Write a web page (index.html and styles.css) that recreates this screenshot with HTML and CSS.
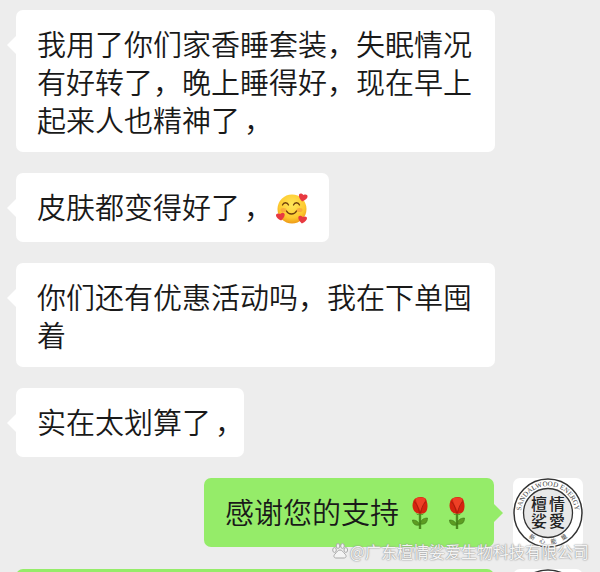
FILE: index.html
```html
<!DOCTYPE html>
<html lang="zh-CN">
<head>
    <meta charset="UTF-8">
    <meta name="viewport" content="width=device-width, initial-scale=1.0">
    <title>聊天记录</title>
    <link rel="stylesheet" href="styles.css">
</head>
<body>
    <main class="chat">
        <div class="message"><p class="bubble">我用了你们家香睡套装，失眠情况有好转了，晚上睡得好，现在早上起来人也精神了<span class="comma">，</span></p></div>

        <div class="message"><p class="bubble">皮肤都变得好了<span class="comma">，</span><svg class="emoji face" viewBox="0 0 36 36" role="img" aria-label="🥰">
            <defs>
                <radialGradient id="skin" cx=".5" cy=".35" r=".65">
                    <stop offset="0" stop-color="#ffe75a"/>
                    <stop offset=".7" stop-color="#fdc92f"/>
                    <stop offset="1" stop-color="#ee9a17"/>
                </radialGradient>
                <path id="heart" d="M0 4.500C-7 0-4.500-5 0-2 4.500-5 7 0 0 4.500z" fill="#e83a41"/>
            </defs>
            <circle cx="20.500" cy="18" r="14.500" fill="url(#skin)"/>
            <path d="M11 14c1-3 5-3 6 0M22 14c1-3 5-3 6 0" stroke="#70400c" stroke-width="1.300" fill="none" stroke-linecap="round"/>
            <path d="M15 20c2 4 8 4 10 0" stroke="#70400c" stroke-width="1.400" fill="none" stroke-linecap="round"/>
            <ellipse cx="12" cy="19" rx="3" ry="2" fill="#f58a3c" opacity=".5"/>
            <ellipse cx="28" cy="19" rx="3" ry="2" fill="#f58a3c" opacity=".5"/>
            <use href="#heart" transform="translate(31.500 6) rotate(12)"/>
            <use href="#heart" transform="translate(9 25) rotate(-8)"/>
            <use href="#heart" transform="translate(31 28) rotate(8)"/>
        </svg></p></div>

        <div class="message"><p class="bubble">你们还有优惠活动吗，我在下单囤着</p></div>

        <div class="message"><p class="bubble">实在太划算了<span class="comma">，</span></p></div>

        <div class="message sent">
            <p class="bubble">感谢您的支持<svg class="emoji" viewBox="0 0 36 36" role="img" aria-label="🌹">
                <g id="rose">
                    <path d="M20.500 16v17" stroke="#4c8a1d" stroke-width="2.400" fill="none"/>
                    <path d="M20 29c-1-4-4-5-7-5 0 4 3 6 7 5z" fill="#5d9c22" stroke="#3d7416" stroke-width=".6"/>
                    <path d="M21 28c0-4 3-6 7-6 0 4-2 7-7 6z" fill="#5d9c22" stroke="#3d7416" stroke-width=".6"/>
                    <path d="M14 5c1-3 4-4 7-4s6 1 6 4c2 4 1 11-2 12-2 1-6 1-8 0-4-2-5-8-3-12z" fill="#d5230f"/>
                    <path d="M16 3c1-2 8-2 10 0-1 4-3 8-5 12-2-4-4-8-5-12z" fill="#ee4026"/>
                    <path d="M14 5c3 2 5 7 6 12M27 5c-3 2-5 7-6 12" stroke="#9c1a0d" stroke-width=".8" fill="none"/>
                    <path d="M16 17c3 2 6 2 9 0l-2 2h-5z" fill="#4c8a1d"/>
                </g>
            </svg><svg class="emoji" viewBox="0 0 36 36" role="img" aria-label="🌹"><use href="#rose"/></svg></p>
            <svg class="avatar" viewBox="0 0 70 70" role="img" aria-label="檀情娑愛">
                <g id="rings">
                    <circle cx="35" cy="35" r="34" fill="#fff" stroke="#333" stroke-width="1.500"/>
                    <circle cx="35" cy="35" r="24.500" fill="#e8e8e8" stroke="#333" stroke-width="1.300"/>
                </g>
                <path id="ring-top" d="M8 35a27 27 0 0 1 54 0" fill="none"/>
                <path id="ring-bottom" d="M4 35a31 31 0 0 0 62 0" fill="none"/>
                <text class="logo-ring"><textPath href="#ring-top" startOffset="50%">SANDALWOOD ENERGY</textPath></text>
                <text class="logo-ring small"><textPath href="#ring-bottom" startOffset="50%">新&emsp;心&emsp;能&emsp;量</textPath></text>
                <text class="logo-name" x="26" y="32">檀</text>
                <text class="logo-name" x="44" y="32">情</text>
                <text class="logo-name" x="26" y="49">娑</text>
                <text class="logo-name" x="44" y="49">愛</text>
            </svg>
        </div>

        <!-- Next message, only its top edge is in view -->
        <div class="message sent peek">
            <p class="bubble wide"></p>
            <svg class="avatar" viewBox="0 0 70 70" aria-hidden="true"><use href="#rings"/></svg>
        </div>
    </main>

    <div class="watermark">
        <svg class="paw" viewBox="0 0 16 16" aria-hidden="true">
            <ellipse cx="2.500" cy="7" rx="1.800" ry="2.400"/>
            <ellipse cx="6" cy="3" rx="1.800" ry="2.400"/>
            <ellipse cx="10.500" cy="3" rx="1.800" ry="2.400"/>
            <ellipse cx="13.800" cy="7" rx="1.800" ry="2.400"/>
            <path d="M8 7c2 0 3 2 5 4s1 4-1 4H4c-2 0-3-2-1-4s3-4 5-4z"/>
        </svg>
        <span>@广东檀情娑爱生物科技有限公司</span>
    </div>
</body>
</html>
```
FILE: styles.css
```css
* {
    box-sizing: border-box;
}
body {
    margin: 0;
    background: #ededed;
    color: #191919;
    font-family: "Noto Sans CJK SC", sans-serif;
    font-weight: 350;
}
.chat {
    display: flex;
    flex-direction: column;
    gap: 21px;
    height: 100vh;
    padding: 10px 17px 0 16px;
    overflow: hidden;
}
.message {
    display: flex;
    flex: none;
    align-items: flex-start;
    gap: 19px;
}
.sent {
    justify-content: flex-end;
}
.peek {
    flex: 1;
    min-height: 0;
    overflow: hidden;
}
.bubble {
    position: relative;
    max-width: 479px;
    min-height: 69px;
    margin: 0;
    padding: 14px 21px;
    border-radius: 7px;
    background: #fff;
    font-size: 29px;
    line-height: 38px;
}
/* little arrow at the side of the bubble */
.bubble::before {
    content: "";
    position: absolute;
    top: 26px;
    left: -9px;
    border: 9px solid transparent;
    border-left-width: 0;
    border-right-color: #fff;
}
.sent .bubble {
    background: #95ec69;
}
.sent .bubble::before {
    left: auto;
    right: -9px;
    border-left: 9px solid #95ec69;
    border-right-width: 0;
}
.wide {
    flex: 1;
}
.comma {
    display: inline-block;
    width: 12px;
    text-indent: 4px;
}
.emoji {
    width: 37px;
    height: 36px;
    vertical-align: -8px;
}
.face {
    margin-left: 19px;
}
.avatar {
    flex: none;
    width: 70px;
    height: 70px;
    border-radius: 7px;
    background: #fff;
}
.logo-ring {
    font-family: "Liberation Serif", "Noto Sans CJK SC", serif;
    font-size: 7px;
    font-weight: 400;
    fill: #444;
    text-anchor: middle;
}
.small {
    font-size: 6px;
}
.logo-name {
    font-size: 16px;
    font-weight: 500;
    fill: #222;
    text-anchor: middle;
}
.watermark {
    position: absolute;
    right: 11px;
    bottom: 9px;
    display: flex;
    align-items: center;
    gap: 2px;
    color: #f4f4f4;
    font-size: 16px;
    line-height: 24px;
    font-weight: 400;
    text-shadow: 0 0 1px #888, 0 0 2px #999;
}
.paw {
    width: 16px;
    height: 16px;
    fill: #f4f4f4;
    stroke: #aaa;
    stroke-width: 1px;
}
```
